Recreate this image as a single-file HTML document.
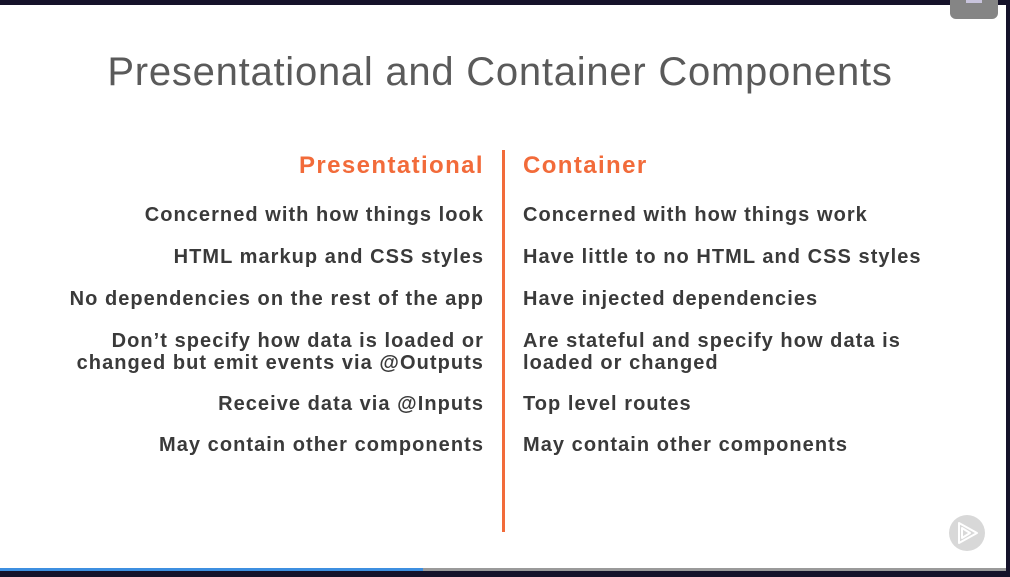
<!DOCTYPE html>
<html><head><style>
html,body{margin:0;padding:0}
body{width:1010px;height:577px;background:#15122a;position:relative;overflow:hidden;font-family:"Liberation Sans",sans-serif}
.slide{position:absolute;left:0;top:5px;width:1006px;height:563px;background:#fff}
.btn{position:absolute;left:950px;top:0;width:48px;height:19px;background:#858585;border-radius:0 0 6px 6px}
.btn:before{content:"";position:absolute;left:16px;top:0;width:16px;height:3px;background:#c8c4dc}
.prog{position:absolute;left:0;top:568px;width:1006px;height:3px;background:#9a9a9a}
.prog div{width:423px;height:3px;background:#3d8fe0}
h1{position:absolute;left:0;width:1000px;top:50px;margin:0;text-align:center;font-weight:normal;font-size:40px;color:#5a5a5a;letter-spacing:0.75px}
.div{position:absolute;left:502px;top:150px;width:3px;height:382px;background:#f26b3a}
.t{position:absolute;font-weight:bold;font-size:20px;color:#3a3a3a;line-height:22px;letter-spacing:1.05px;white-space:nowrap}
.l{right:526px;text-align:right}
.r{left:523px}
.h{color:#f26b3a;font-size:24px;letter-spacing:1.4px}
.play{position:absolute;left:949px;top:515px;width:36px;height:36px;border-radius:50%;background:#d8d8d8}
</style></head><body>
<div class="slide"></div>
<div class="btn"></div>
<h1>Presentational and Container Components</h1>
<div class="div"></div>
<div class="t l h" style="top:155px">Presentational</div>
<div class="t r h" style="top:155px">Container</div>
<div class="t l" style="top:204px">Concerned with how things look</div>
<div class="t r" style="top:204px">Concerned with how things work</div>
<div class="t l" style="top:246px">HTML markup and CSS styles</div>
<div class="t r" style="top:246px">Have little to no HTML and CSS styles</div>
<div class="t l" style="top:288px">No dependencies on the rest of the app</div>
<div class="t r" style="top:288px">Have injected dependencies</div>
<div class="t l" style="top:330px">Don’t specify how data is loaded or<br>changed but emit events via @Outputs</div>
<div class="t r" style="top:330px">Are stateful and specify how data is<br>loaded or changed</div>
<div class="t l" style="top:393px">Receive data via @Inputs</div>
<div class="t r" style="top:393px">Top level routes</div>
<div class="t l" style="top:434px">May contain other components</div>
<div class="t r" style="top:434px">May contain other components</div>
<div class="play"><svg width="36" height="36" viewBox="0 0 36 36"><path d="M10 8 L28 18 L10 28 Z M13 13 L21 18 L13 23 Z" fill="none" stroke="#fff" stroke-width="2" stroke-linejoin="round"/></svg></div>
<div class="prog"><div></div></div>
</body></html>
